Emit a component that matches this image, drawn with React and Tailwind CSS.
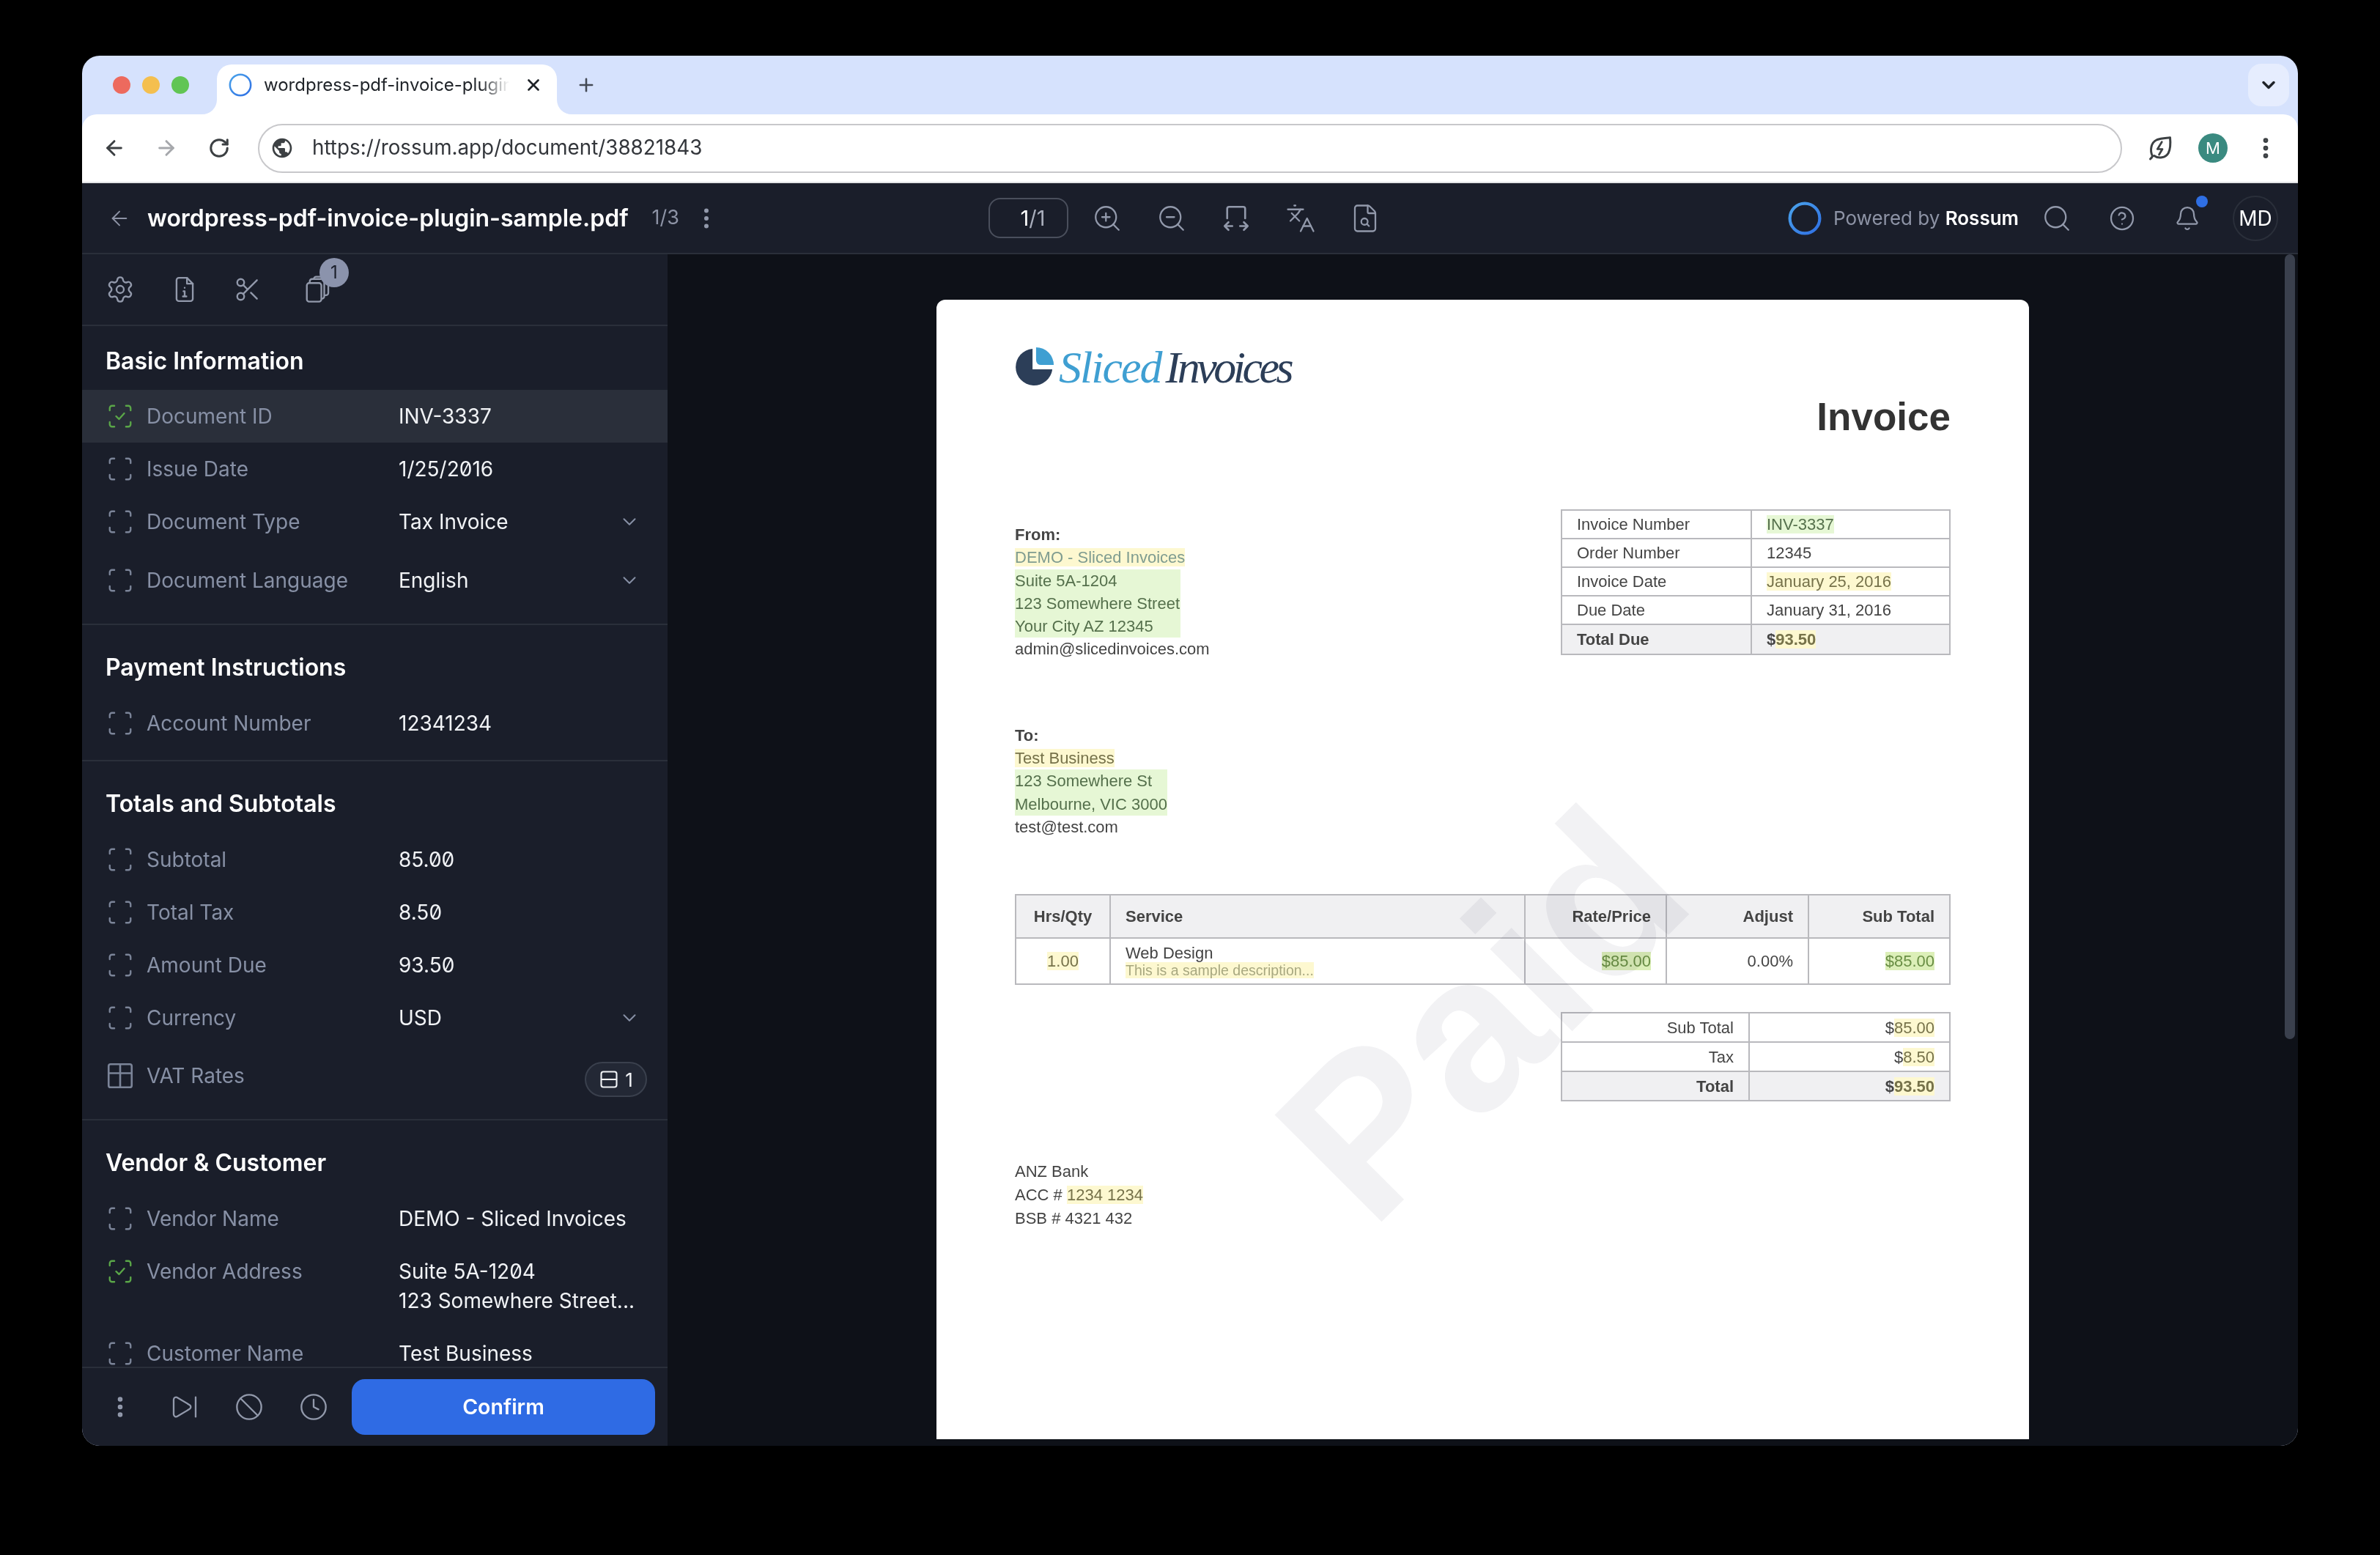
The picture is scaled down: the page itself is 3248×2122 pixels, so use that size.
import React from "react";
import { MdPublic } from "react-icons/md";
import {
  ArrowLeft,
  ArrowRight,
  RotateCw,
  Plus,
  X,
  ChevronDown,
  EllipsisVertical,
  ZoomIn,
  ZoomOut,
  Languages,
  FileSearch,
  Search,
  CircleHelp,
  Bell,
  Settings,
  Scissors,
  SkipForward,
  Ban,
  Clock,
} from "lucide-react";

const ui = "font-['Inter',sans-serif]";
const doc = "font-['Liberation_Sans',Arial,sans-serif]";

function Svg({ className, children }) {
  return (
    <svg viewBox="0 0 24 24" fill="none" stroke="currentColor" strokeWidth="1.5" strokeLinecap="round" strokeLinejoin="round" className={className}>
      {children}
    </svg>
  );
}

function ScanIcon({ checked }) {
  return (
    <Svg className={`w-[38px] h-[38px] ${checked ? "text-[#5aa648]" : "text-[#7b8498]"}`}>
      <path d="M3 7V5a2 2 0 0 1 2-2h2" />
      <path d="M17 3h2a2 2 0 0 1 2 2v2" />
      <path d="M21 17v2a2 2 0 0 1-2 2h-2" />
      <path d="M7 21H5a2 2 0 0 1-2-2v-2" />
      {checked && <path d="M8.5 12l2.5 2.5 4.5-5" />}
    </Svg>
  );
}

function TableIcon() {
  return (
    <Svg className="w-[42px] h-[42px] -ml-[2px] shrink-0 text-[#7b8498]">
      <rect x="3" y="3" width="18" height="18" rx="1.5" />
      <path d="M3 10h18M12 3v18" />
    </Svg>
  );
}

function FileInfoIcon() {
  return (
    <Svg className="w-[38px] h-[38px] ml-[49px] text-[#9299ab]">
      <path d="M14 2H7a2 2 0 0 0-2 2v16a2 2 0 0 0 2 2h10a2 2 0 0 0 2-2V7z" />
      <path d="M14 2v5h5" />
      <path d="M12 10.5v.01M11 13.5h1V18M10.5 18h3" />
    </Svg>
  );
}

function CopiesIcon() {
  return (
    <Svg className="w-[38px] h-[38px] text-[#9299ab]">
      <rect x="9" y="1" width="12.500" height="16" rx="2" />
      <rect x="5.500" y="3" width="12.500" height="17" rx="2" fill="#1a1e2a" />
      <rect x="3" y="6.500" width="12.500" height="16" rx="2" fill="#1a1e2a" />
    </Svg>
  );
}

function FitWidthIcon({ className }) {
  return (
    <Svg className={className}>
      <path d="M5 12V4.5A1.5 1.5 0 0 1 6.5 3h11A1.5 1.5 0 0 1 19 4.5V12" />
      <path d="M3 18h6M6 15l-3 3 3 3" />
      <path d="M15 18h6M18 15l3 3-3 3" />
    </Svg>
  );
}

function LeafBoltIcon() {
  return (
    <svg viewBox="0 0 24 24" fill="none" stroke="#3c4043" strokeWidth="2" strokeLinecap="round" strokeLinejoin="round" className="w-[36px] h-[36px]">
      <path d="M3 22c1-1 1.500-1.500 2-2.500C2.500 14 3.500 7 9 4.500 13 3 17 3 21 2.500c.5 5 .5 10-1.500 14C17 21 10.500 22 6.500 19" />
      <path d="M13.500 6.500L9.500 13h4.500l-3 5" strokeWidth="1.800" />
    </svg>
  );
}

function RingIcon({ id, className, width }) {
  return (
    <svg viewBox="0 0 44 44" fill="none" className={className}>
      <defs>
        <linearGradient id={id} x1="0" y1="0" x2="1" y2="1">
          <stop offset="0" stopColor="#4aa3ea" />
          <stop offset="1" stopColor="#2f6fe4" />
        </linearGradient>
      </defs>
      <circle cx="22" cy="22" r="19.500" stroke={`url(#${id})`} strokeWidth={width} />
    </svg>
  );
}

function PieLogo() {
  return (
    <svg viewBox="0 0 56 56" className="w-[54px] h-[56px] shrink-0">
      <path d="M25 2a26 26 0 1 0 28 29H25z" fill="#2c3e58" />
      <path d="M30 0a25 25 0 0 1 25 25H37a7 7 0 0 1-7-7z" fill="#3f9fd2" />
    </svg>
  );
}

function TabStrip() {
  return (
    <div className="h-[80px] flex items-end shrink-0 pl-[184px] pr-[12px] relative">
      <div className="flex gap-[16px] absolute left-[42px] top-[28px]">
        <span className="w-[24px] h-[24px] rounded-full bg-[#ed6a5e]" />
        <span className="w-[24px] h-[24px] rounded-full bg-[#f4bf4f]" />
        <span className="w-[24px] h-[24px] rounded-full bg-[#61c554]" />
      </div>
      <div className={`${ui} relative w-[464px] h-[68px] bg-white rounded-t-[20px] flex items-center pl-[16px] pb-[12px] text-[#1f2328] text-[24px]`}>
        <span className="absolute bottom-0 -left-[20px] w-[20px] h-[20px] bg-white">
          <span className="block w-full h-full bg-[#d6e2fd] rounded-br-[20px]" />
        </span>
        <span className="absolute bottom-0 -right-[20px] w-[20px] h-[20px] bg-white">
          <span className="block w-full h-full bg-[#d6e2fd] rounded-bl-[20px]" />
        </span>
        <RingIcon id="tabring" width="3.500" className="w-[32px] h-[32px] shrink-0" />
        <span className="ml-[16px] w-[335px] overflow-hidden whitespace-nowrap [mask-image:linear-gradient(to_right,black_88%,transparent)]">
          wordpress-pdf-invoice-plugin-sample.pdf
        </span>
        <X className="ml-[20px] w-[26px] h-[26px] text-[#1f2328]" strokeWidth={2.5} />
      </div>
      <Plus className="ml-[26px] mb-[26px] w-[28px] h-[28px] text-[#444a55]" strokeWidth={2.2} />
      <div className="ml-auto mb-[11px] w-[56px] h-[58px] rounded-[18px] bg-[#e6edfe] flex items-center justify-center">
        <ChevronDown className="w-[28px] h-[28px] text-[#1f2328]" strokeWidth={3} />
      </div>
    </div>
  );
}

function UrlBar() {
  return (
    <div className="h-[94px] shrink-0 bg-white rounded-t-[20px] border-b-2 border-[#e3e4e6] flex items-center pl-[28px] pr-[26px]">
      <ArrowLeft className="w-[32px] h-[32px] text-[#3c4043]" strokeWidth={2.2} />
      <ArrowRight className="ml-[39px] w-[32px] h-[32px] text-[#a6a8ac]" strokeWidth={2.2} />
      <RotateCw className="ml-[41px] w-[30px] h-[30px] text-[#3c4043]" strokeWidth={2.4} />
      <div className={`${ui} ml-[38px] w-[2544px] h-[67px] rounded-full border-2 border-[#c8c8cb] flex items-center pl-[15px] text-[27.800px] text-[#33363b]`}>
        <MdPublic className="w-[32px] h-[32px] text-[#3c4043]" />
        <span className="ml-[25px]">https://rossum.app/document/38821843</span>
      </div>
      <div className="ml-[34px]">
        <LeafBoltIcon />
      </div>
      <div className={`${ui} ml-[34px] w-[40px] h-[40px] rounded-full bg-[#3a8a80] text-white text-[22px] flex items-center justify-center`}>M</div>
      <EllipsisVertical className="ml-[34px] w-[36px] h-[36px] text-[#3c4043]" strokeWidth={2.5} />
    </div>
  );
}

function AppHeader() {
  const iconCls = "w-[36px] h-[36px] text-[#9299ab]";
  const toolCls = "w-[42px] h-[42px] text-[#9299ab]";
  return (
    <div className={`${ui} h-[97px] shrink-0 bg-[#1a1e2a] border-b-2 border-[#2a2f3a] flex items-center`}>
      <div className="w-[1237px] flex items-center shrink-0 pl-[35px]">
        <ArrowLeft className="w-[32px] h-[32px] text-[#8d93a5]" strokeWidth={1.5} />
        <span className="ml-[22px] text-white text-[32px] font-semibold whitespace-nowrap">wordpress-pdf-invoice-plugin-sample.pdf</span>
        <span className="ml-[32px] text-[#8d93a5] text-[27px]">1/3</span>
        <EllipsisVertical className="ml-[19px] w-[36px] h-[36px] text-[#9299ab]" strokeWidth={2} />
      </div>
      <div className="w-[109px] h-[55px] rounded-[16px] border-2 border-[#4a4f5c] flex items-center justify-center text-white text-[29px] pl-[12px]">
        1<span className="text-[#a8adbb]">/1</span>
      </div>
      <div className="ml-[32px] flex items-center gap-[46px]">
        <ZoomIn className={toolCls} strokeWidth={1.3} />
        <ZoomOut className={toolCls} strokeWidth={1.3} />
        <FitWidthIcon className={toolCls} />
        <Languages className={toolCls} strokeWidth={1.3} />
        <FileSearch className={toolCls} strokeWidth={1.3} />
      </div>
      <div className="ml-auto flex items-center pr-[27px]">
        <RingIcon id="poweredring" width="4" className="w-[46px] h-[46px]" />
        <span className="ml-[16px] text-[26px] text-[#8d93a5] whitespace-nowrap">
          Powered by <span className="text-white font-semibold">Rossum</span>
        </span>
        <Search className={`ml-[31px] ${toolCls}`} strokeWidth={1.3} />
        <CircleHelp className={`ml-[50px] ${iconCls}`} strokeWidth={1.5} />
        <span className="ml-[53px] relative">
          <Bell className={iconCls} strokeWidth={1.5} />
          <span className="absolute -top-[13px] -right-[10px] w-[16px] h-[16px] rounded-full bg-[#2f6fe4]" />
        </span>
        <span className="ml-[44px] w-[62px] h-[62px] rounded-full border-2 border-[#2a2f3a] flex items-center justify-center text-white text-[28px]">MD</span>
      </div>
    </div>
  );
}

function Row({ icon, label, value, select, active, checked, h = "h-[72px]", badge, children }) {
  return (
    <div className={`${h} flex items-start shrink-0 pl-[33px] pr-[28px] ${active ? "bg-[#2a2f3a]" : ""}`}>
      <span className="h-[72px] flex items-center w-[55px] shrink-0">
        {icon || <ScanIcon checked={checked} />}
      </span>
      <span className="w-[344px] shrink-0 h-[72px] flex items-center text-[28px] text-[#8790a5]">{label}</span>
      <span className="flex-1 pt-[16px] text-[28px] leading-[40px] text-[#f1f3f6] slashed-zero whitespace-nowrap">
        {value}
        {children}
      </span>
      {select && (
        <span className="h-[72px] flex items-center pr-[9px]">
          <ChevronDown className="w-[30px] h-[30px] text-[#8790a5]" strokeWidth={1.6} />
        </span>
      )}
      {badge && (
        <span className="mt-[17px] w-[85px] h-[48px] rounded-full border-2 border-[#3a404d] bg-[#232835] flex items-center justify-center gap-[8px] text-[26px] text-[#f1f3f6]">
          <svg viewBox="0 0 24 24" fill="none" stroke="currentColor" strokeWidth="1.8" className="w-[28px] h-[28px]">
            <rect x="3" y="3" width="18" height="18" rx="2.500" />
            <path d="M3 12h18" />
          </svg>
          1
        </span>
      )}
    </div>
  );
}

function Section({ title, first, children }) {
  return (
    <div className={`${first ? "pb-[15px]" : "pb-[14px]"} border-b-2 border-[#2a2f3a] shrink-0`}>
      <h2 className={`${first ? "pt-[28px] pb-[19px]" : "pt-[38px] pb-[20px]"} pl-[32px] leading-[40px] text-[32px] font-semibold text-white`}>{title}</h2>
      {children}
    </div>
  );
}

function Sidebar() {
  const iconCls = "w-[40px] h-[40px] text-[#9299ab]";
  return (
    <div className={`${ui} w-[799px] shrink-0 bg-[#1a1e2a] flex flex-col`}>
      <div className="h-[98px] shrink-0 border-b-2 border-[#2a2f3a] flex items-center pl-[32px]">
        <Settings className={iconCls} strokeWidth={1.4} />
        <FileInfoIcon />
        <Scissors className="ml-[48px] w-[38px] h-[38px] text-[#9299ab]" strokeWidth={1.5} />
        <span className="relative ml-[57px]">
          <CopiesIcon />
          <span className="absolute -top-[24px] left-[22px] w-[40px] h-[40px] rounded-full bg-[#8b93ac] flex items-center justify-center text-[#1a1e2a] text-[24px]">1</span>
        </span>
      </div>
      <div className="flex-1 min-h-0 overflow-hidden">
        <Section title="Basic Information" first>
          <Row label="Document ID" value="INV-3337" active checked />
          <Row label="Issue Date" value="1/25/2016" />
          <Row label="Document Type" value="Tax Invoice" select h="h-[80px]" />
          <Row label="Document Language" value="English" select h="h-[80px]" />
        </Section>
        <Section title="Payment Instructions">
          <Row label="Account Number" value="12341234" />
        </Section>
        <Section title="Totals and Subtotals">
          <Row label="Subtotal" value="85.00" />
          <Row label="Total Tax" value="8.50" />
          <Row label="Amount Due" value="93.50" />
          <Row label="Currency" value="USD" select h="h-[79px]" />
          <Row label="VAT Rates" value="" badge h="h-[81px]" icon={<TableIcon />} />
        </Section>
        <Section title="Vendor & Customer">
          <Row label="Vendor Name" value="DEMO - Sliced Invoices" />
          <Row label="Vendor Address" checked h="h-[112px]">
            Suite 5A-1204
            <br />
            123 Somewhere Street...
          </Row>
          <Row label="Customer Name" value="Test Business" />
        </Section>
      </div>
      <div className="h-[108px] shrink-0 border-t-2 border-[#2a2f3a] flex items-center pl-[34px] pr-[17px]">
        <EllipsisVertical className="w-[36px] h-[36px] text-[#9299ab]" strokeWidth={2.4} />
        <SkipForward className={`ml-[50px] ${iconCls}`} strokeWidth={1.4} />
        <Ban className={`ml-[48px] ${iconCls}`} strokeWidth={1.4} />
        <Clock className={`ml-[48px] ${iconCls}`} strokeWidth={1.4} />
        <button className="ml-[32px] flex-1 h-[76px] rounded-[18px] bg-[#2f6be4] text-white text-[28.500px] font-semibold">Confirm</button>
      </div>
    </div>
  );
}

const G = ({ children }) => <span className="bg-[#e6f7d5] text-[#55704c]">{children}</span>;
const Y = ({ children }) => <span className="bg-[#fdf8d0] text-[#76724a]">{children}</span>;
const GD = ({ children }) => <span className="bg-[#dcefb8] text-[#6a8f45]">{children}</span>;

const cell = "border-2 border-[#b9b9bd] px-[20px]";

function InvoiceMeta() {
  const rows = [
    ["Invoice Number", <G>INV-3337</G>],
    ["Order Number", "12345"],
    ["Invoice Date", <Y>January 25, 2016</Y>],
    ["Due Date", "January 31, 2016"],
  ];
  return (
    <table className="-mt-[1px] w-[532px] border-collapse table-fixed text-[22px] text-[#444]">
      <colgroup>
        <col className="w-[259px]" />
        <col />
      </colgroup>
      <tbody>
        {rows.map(([k, v]) => (
          <tr key={k} className="h-[39px]">
            <td className={cell}>{k}</td>
            <td className={cell}>{v}</td>
          </tr>
        ))}
        <tr className="h-[41px] bg-[#f0f0f2] font-bold">
          <td className={cell}>Total Due</td>
          <td className={cell}>
            $<Y>93.50</Y>
          </td>
        </tr>
      </tbody>
    </table>
  );
}

function ItemsTable() {
  return (
    <table className="mt-[76px] w-[1277px] border-collapse table-fixed text-[22px] text-[#444]">
      <colgroup>
        <col className="w-[129px]" />
        <col className="w-[566px]" />
        <col className="w-[193px]" />
        <col className="w-[194px]" />
        <col />
      </colgroup>
      <thead>
        <tr className="h-[59px] bg-[#f0f0f2] font-bold">
          <td className={`${cell} text-center`}>Hrs/Qty</td>
          <td className={cell}>Service</td>
          <td className={`${cell} text-right`}>Rate/Price</td>
          <td className={`${cell} text-right`}>Adjust</td>
          <td className={`${cell} text-right`}>Sub Total</td>
        </tr>
      </thead>
      <tbody>
        <tr className="h-[63px]">
          <td className={`${cell} text-center`}>
            <Y>1.00</Y>
          </td>
          <td className={`${cell} leading-[24px]`}>
            Web Design
            <br />
            <span className="bg-[#fdf8d0] text-[#a8a880] text-[19.500px] block w-fit leading-[22px]">This is a sample description...</span>
          </td>
          <td className={`${cell} text-right`}>
            <GD>$85.00</GD>
          </td>
          <td className={`${cell} text-right`}>0.00%</td>
          <td className={`${cell} text-right`}>
            <GD>$85.00</GD>
          </td>
        </tr>
      </tbody>
    </table>
  );
}

function TotalsTable() {
  return (
    <table className="mt-[37px] ml-auto w-[532px] border-collapse table-fixed text-[22px] text-[#444]">
      <colgroup>
        <col className="w-[256px]" />
        <col />
      </colgroup>
      <tbody>
        <tr className="h-[40px]">
          <td className={`${cell} text-right`}>Sub Total</td>
          <td className={`${cell} text-right`}>
            $<Y>85.00</Y>
          </td>
        </tr>
        <tr className="h-[40px]">
          <td className={`${cell} text-right`}>Tax</td>
          <td className={`${cell} text-right`}>
            $<Y>8.50</Y>
          </td>
        </tr>
        <tr className="h-[40px] bg-[#f0f0f2] font-bold">
          <td className={`${cell} text-right`}>Total</td>
          <td className={`${cell} text-right`}>
            $<Y>93.50</Y>
          </td>
        </tr>
      </tbody>
    </table>
  );
}

function InvoicePage() {
  return (
    <div className={`${doc} relative w-[1491px] h-[1555px] bg-white rounded-t-[12px] overflow-hidden px-[107px] pt-[64px] text-[22px] text-[#444]`}>
      <div className="flex items-center h-[56px]">
        <PieLogo />
        <span className="ml-[6px] font-['Liberation_Serif',serif] italic text-[62px] leading-none text-[#3f9fd2] tracking-[-2px]">Sliced</span>
        <span className="ml-[6px] font-['Liberation_Serif',serif] italic text-[62px] leading-none text-[#2c3e58] tracking-[-4.500px]">Invoices</span>
      </div>
      <div className="text-right text-[53px] font-bold leading-[64px] text-[#333] mt-[8px]">Invoice</div>
      <div className="flex justify-between items-start mt-[95px]">
        <div className="mt-[18px] leading-[31.300px]">
          <div className="font-bold">From:</div>
          <div>
            <span className="bg-[#fdf8d0] text-[#7f9c90]">DEMO - Sliced Invoices</span>
          </div>
          <div className="bg-[#e6f7d5] text-[#55704c] w-[226px]">
            Suite 5A-1204
            <br />
            123 Somewhere Street
            <br />
            Your City AZ 12345
          </div>
          <div>admin@slicedinvoices.com</div>
        </div>
        <InvoiceMeta />
      </div>
      <div className="mt-[86px] leading-[31.300px]">
        <div className="font-bold">To:</div>
        <div>
          <Y>Test Business</Y>
        </div>
        <div className="bg-[#e6f7d5] text-[#55704c] w-[208px]">
          123 Somewhere St
          <br />
          Melbourne, VIC 3000
        </div>
        <div>test@test.com</div>
      </div>
      <ItemsTable />
      <TotalsTable />
      <div className="mt-[80px] leading-[32px]">
        <div>ANZ Bank</div>
        <div>
          ACC # <Y>1234 1234</Y>
        </div>
        <div>BSB # 4321 432</div>
      </div>
      <span className="absolute left-[427px] top-[825px] -rotate-45 origin-center text-[300px] font-bold leading-none text-[#f2f2f4] mix-blend-multiply pointer-events-none">
        Paid
      </span>
    </div>
  );
}

export default function App() {
  return (
    <div className="w-[3248px] h-[2122px] bg-black pt-[76px] pl-[112px]">
      <div className="w-[3024px] h-[1897px] rounded-[24px] overflow-hidden bg-[#d6e2fd] flex flex-col">
        <TabStrip />
        <UrlBar />
        <AppHeader />
        <div className="flex-1 min-h-0 flex">
          <Sidebar />
          <div className="relative flex-1 bg-[#0e1118] flex justify-center pt-[62px] overflow-hidden">
            <InvoicePage />
            <span className="absolute right-[4px] top-0 w-[14px] h-[1071px] rounded-full bg-[#3a404d]" />
          </div>
        </div>
      </div>
    </div>
  );
}
